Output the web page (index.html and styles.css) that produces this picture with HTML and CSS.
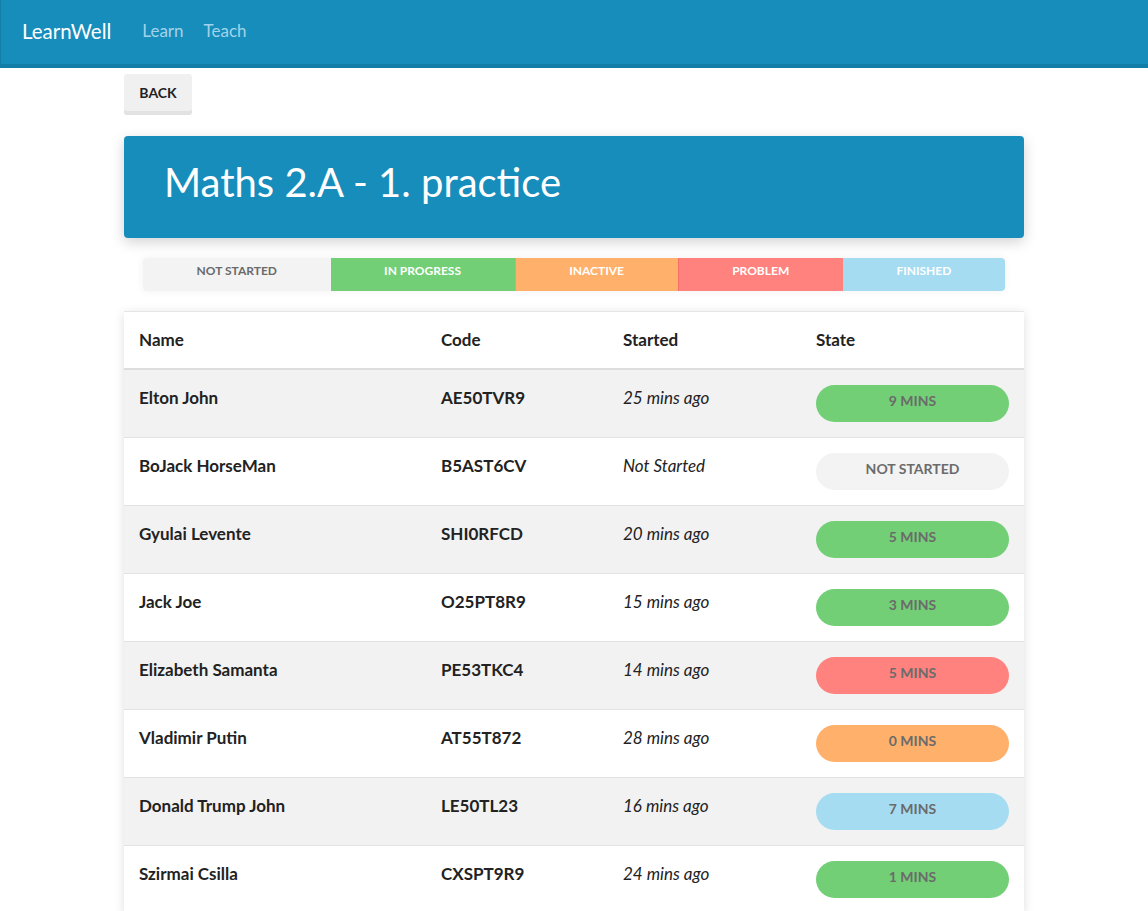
FILE: index.html
```html
<!DOCTYPE html>
<html>
<head>
<meta charset="utf-8">
<link rel="stylesheet" href="styles.css">
</head>
<body>
<nav class="navbar">
  <span class="brand">LearnWell</span>
  <a class="nav-link">Learn</a>
  <a class="nav-link">Teach</a>
</nav>
<main class="container">
  <button class="btn-back">BACK</button>
  <div class="title-card"><h1>Maths 2.A - 1. practice</h1></div>
  <div class="legend">
    <span class="seg s-not">NOT STARTED</span>
    <span class="seg s-prog">IN PROGRESS</span>
    <span class="seg s-inact">INACTIVE</span>
    <span class="seg s-prob">PROBLEM</span>
    <span class="seg s-fin">FINISHED</span>
  </div>
  <div class="table-card">
    <table class="students">
      <thead>
        <tr><th class="c-name">Name</th><th class="c-code">Code</th><th class="c-start">Started</th><th class="c-state">State</th></tr>
      </thead>
      <tbody>
        <tr><td>Elton John</td><td>AE50TVR9</td><td class="ago">25 mins ago</td><td><span class="pill p-prog">9 MINS</span></td></tr>
        <tr><td>BoJack HorseMan</td><td>B5AST6CV</td><td class="ago">Not Started</td><td><span class="pill p-not">NOT STARTED</span></td></tr>
        <tr><td>Gyulai Levente</td><td>SHI0RFCD</td><td class="ago">20 mins ago</td><td><span class="pill p-prog">5 MINS</span></td></tr>
        <tr><td>Jack Joe</td><td>O25PT8R9</td><td class="ago">15 mins ago</td><td><span class="pill p-prog">3 MINS</span></td></tr>
        <tr><td>Elizabeth Samanta</td><td>PE53TKC4</td><td class="ago">14 mins ago</td><td><span class="pill p-prob">5 MINS</span></td></tr>
        <tr><td>Vladimir Putin</td><td>AT55T872</td><td class="ago">28 mins ago</td><td><span class="pill p-inact">0 MINS</span></td></tr>
        <tr><td>Donald Trump John</td><td>LE50TL23</td><td class="ago">16 mins ago</td><td><span class="pill p-fin">7 MINS</span></td></tr>
        <tr><td>Szirmai Csilla</td><td>CXSPT9R9</td><td class="ago">24 mins ago</td><td><span class="pill p-prog">1 MINS</span></td></tr>
      </tbody>
    </table>
  </div>
</main>
</body>
</html>
```

FILE: styles.css
```css
* { box-sizing: border-box; }
html, body { margin: 0; padding: 0; background: #fff; }
body { font-family: "Source Sans Pro", Lato, "Liberation Sans", sans-serif; color: #222; }

.navbar {
  height: 68px;
  background: #178dbb;
  border-left: 1px solid #137fa9;
  border-bottom: 4px solid #137fa9;
  display: flex;
  align-items: center;
  padding-left: 21px;
  padding-bottom: 3px;
}
.brand { color: #fff; font-size: 20.5px; margin-right: 31px; }
.nav-link { color: #a3d3ea; font-size: 17px; margin-right: 20px; }

.container { width: 900px; margin: 0 auto; padding-top: 6px; padding-bottom: 40px; }

.btn-back {
  display: block;
  width: 68px;
  height: 41px;
  border: 0;
  border-radius: 3px;
  background: #f0f0f0;
  box-shadow: inset 0 -4px 0 #e2e2e2;
  font-family: inherit;
  font-weight: 700;
  font-size: 14px;
  color: #222;
  padding: 0 0 4px;
}

.title-card {
  margin-top: 21px;
  height: 102px;
  background: #178dbb;
  border-radius: 4px;
  box-shadow: 0 4px 14px rgba(0,0,0,0.18);
  display: flex;
  align-items: center;
  padding: 0 40px 10px;
}
.title-card h1 { margin: 0; color: #fff; font-weight: 400; font-size: 40px; }

.legend {
  margin: 20px 19px 0;
  height: 33px;
  display: flex;
  border-radius: 4px;
  overflow: hidden;
  box-shadow: 0 0 8px rgba(0,0,0,0.06);
}
.seg {
  flex: 1 1 auto;
  display: flex;
  align-items: center;
  justify-content: center;
  font-size: 12px;
  font-weight: 700;
  color: #fff;
  padding-bottom: 8px;
}
.s-not { background: #f3f3f3; color: #6a6a6a; }
.s-prog { background: #72cf76; }
.s-inact { background: #ffb06b; border-left: 1px solid #f2a050; }
.s-prob { background: #ff827e; border-left: 1px solid #f5706a; }
.s-fin { background: #a5dcf2; }

.table-card {
  margin-top: 20px;
  background: #fff;
  border-top: 1px solid #e6e6e6;
  box-shadow: 0 2px 10px rgba(0,0,0,0.13);
}
.students { width: 100%; border-collapse: collapse; font-size: 17px; }
.students th {
  text-align: left;
  font-weight: 700;
  padding: 16px 15px 16px;
  line-height: 24px;
  border-bottom: 2px solid #ddd;
}
.c-name { width: 302px; }
.c-code { width: 182px; }
.c-start { width: 193px; }
.students td {
  font-weight: 700;
  padding: 15px 15px;
  line-height: 26px;
  vertical-align: top;
  border-top: 1px solid #e2e2e2;
  height: 68px;
}
.students tbody tr:first-child td { border-top: 0; height: 67px; }
.students tbody tr:nth-child(odd) { background: #f2f2f2; }
.students td.ago { font-weight: 400; font-style: italic; }

.pill {
  display: flex;
  align-items: center;
  justify-content: center;
  width: 193px;
  height: 37px;
  border-radius: 19px;
  font-size: 14px;
  font-weight: 700;
  color: #6b6b6b;
  font-style: normal;
  padding-bottom: 5px;
}
.p-prog { background: #72cf76; }
.p-not { background: #f3f3f3; }
.p-prob { background: #ff827e; }
.p-inact { background: #ffb06b; }
.p-fin { background: #a5dcf2; }
```
